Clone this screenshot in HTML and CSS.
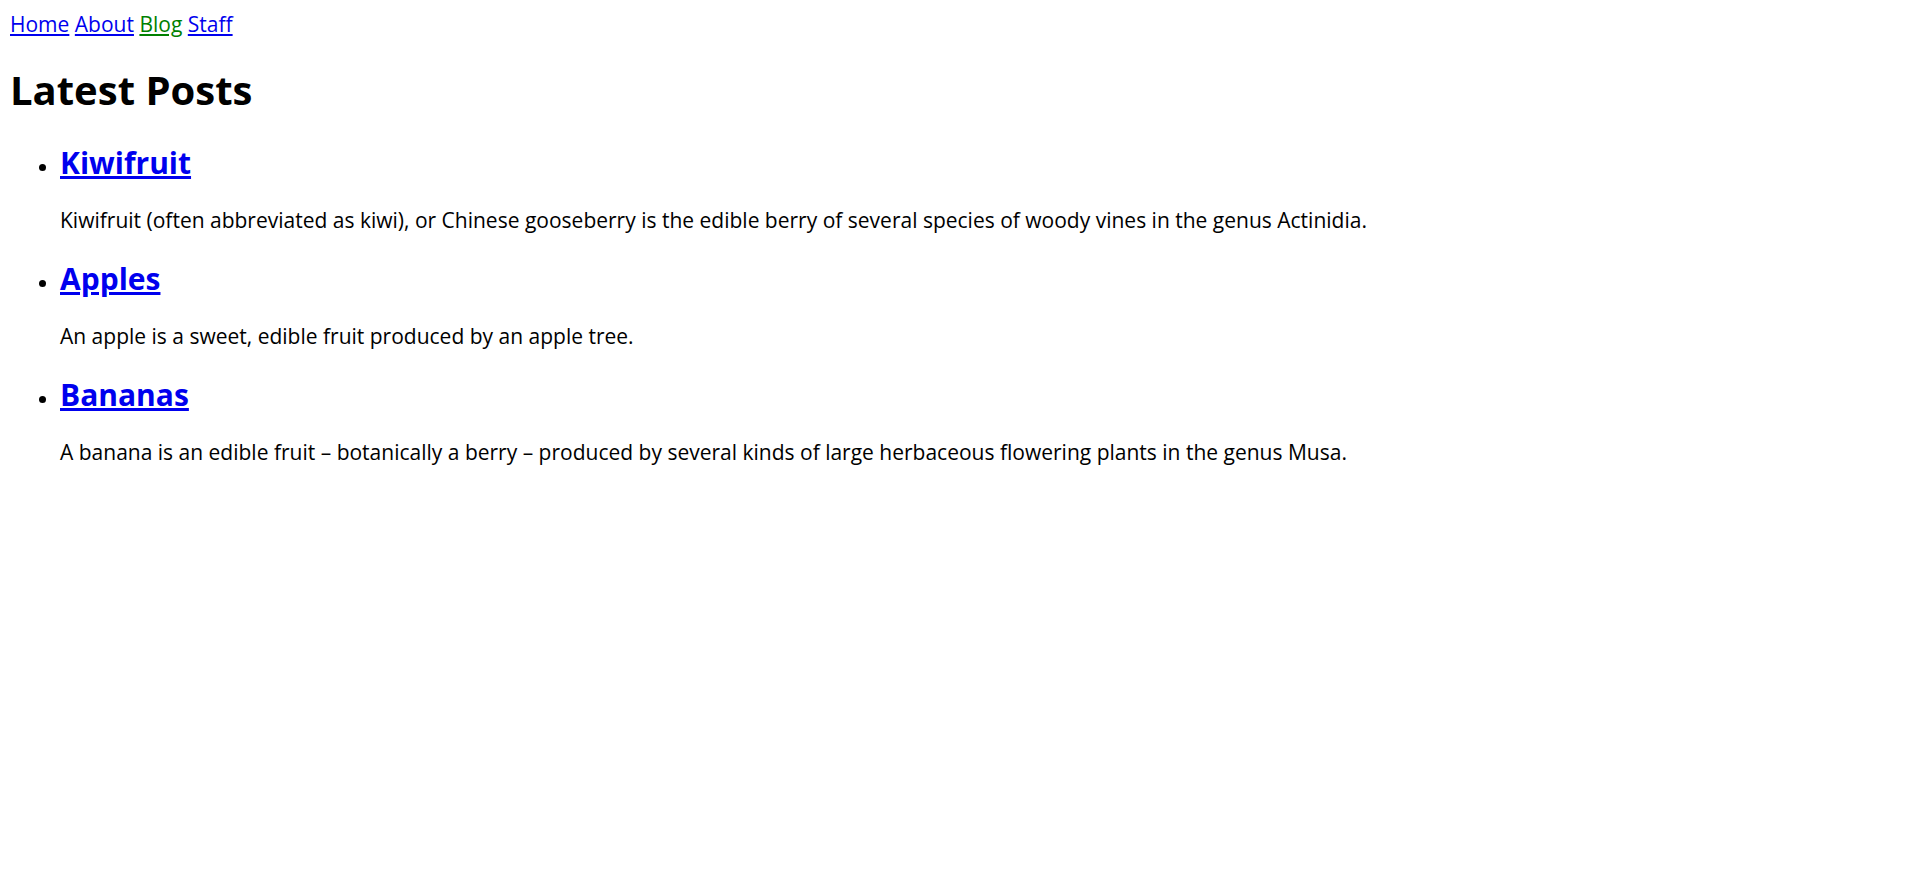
FILE: index.html
```html
<!DOCTYPE html>
<html lang="en">
<head>
<meta charset="utf-8">
<title>Latest Posts</title>
<link rel="stylesheet" href="styles.css">
</head>
<body>
<nav class="nav">
<a href="#home">Home</a>
<a href="#about">About</a>
<a href="#blog" class="active">Blog</a>
<a href="#staff">Staff</a>
</nav>
<h1 class="title">Latest Posts</h1>
<ul class="posts">
<li class="post"><h2 class="post-title"><a href="#kiwifruit">Kiwifruit</a></h2>
<p class="summary">Kiwifruit (often abbreviated as kiwi), or Chinese gooseberry is the edible berry of several species of woody vines in the genus Actinidia.</p></li>
<li class="post"><h2 class="post-title"><a href="#apples">Apples</a></h2>
<p class="summary">An apple is a sweet, edible fruit produced by an apple tree.</p></li>
<li class="post"><h2 class="post-title"><a href="#bananas">Bananas</a></h2>
<p class="summary">A banana is an edible fruit – botanically a berry – produced by several kinds of large herbaceous flowering plants in the genus Musa.</p></li>
</ul>
</body>
</html>
```
FILE: styles.css
```css
body {
  margin: 10px;
  font-family: "Open Sans", "Noto Sans", sans-serif;
  font-size: 21px;
  line-height: 28px;
  color: #000;
  background: #fff;
}
a { color: #0000ee; }
.active { color: #008000; }
.title {
  margin: 24px 0;
  font-size: 40px;
  font-weight: 700;
  line-height: 56px;
}
.posts {
  margin: 24px 0;
  padding-left: 50px;
}
.post-title {
  margin: 0 0 22px;
  font-size: 30px;
  font-weight: 700;
  line-height: 42px;
}
.summary { margin: 0 0 24px; }
```
